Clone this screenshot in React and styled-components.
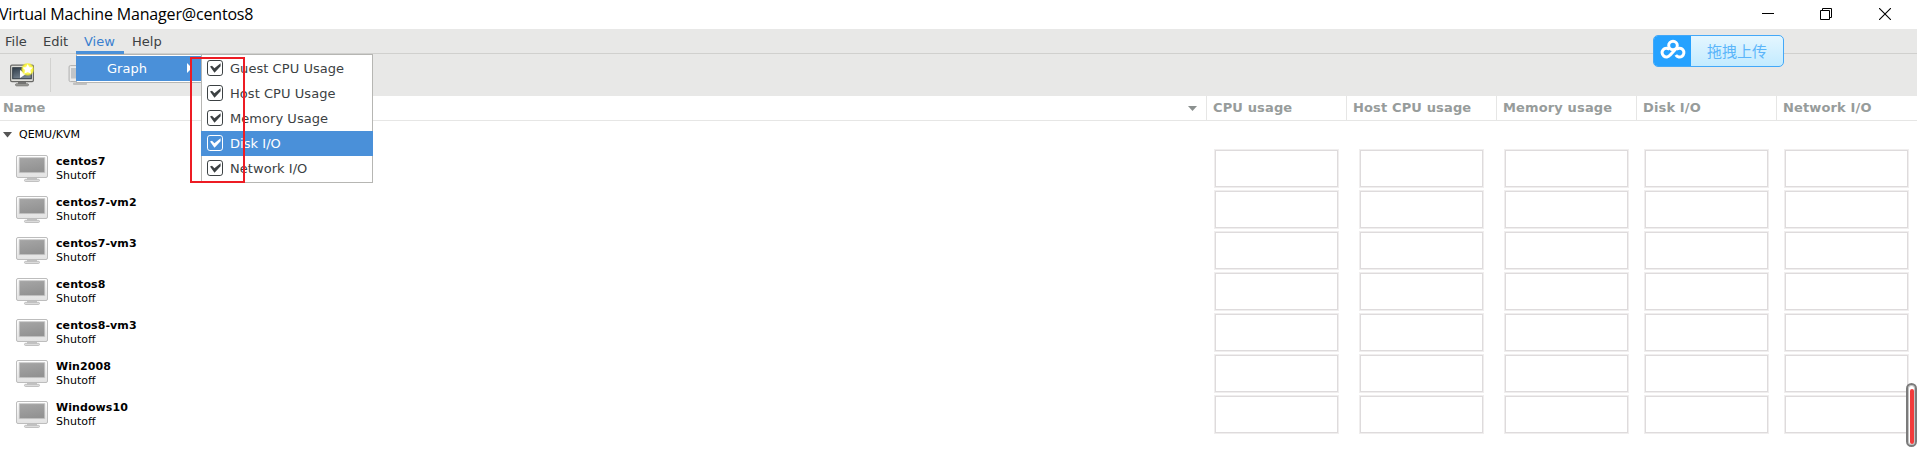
import React from 'react';
import styled, { createGlobalStyle } from 'styled-components';

const Global = createGlobalStyle`
  * { box-sizing: border-box; }
  body { margin: 0; background: #fff; overflow: hidden; }
`;

const Window = styled.div`
  position: relative;
  width: 1917px;
  height: 468px;
  overflow: hidden;
  background: #fff;
  color: #2e3436;
  font: 13px/16px "DejaVu Sans", sans-serif;
  white-space: nowrap;
`;

const TitleBar = styled.header`
  height: 29px;
  display: flex;
  justify-content: space-between;
  padding-right: 26px;
`;
const Title = styled.h1`
  margin: 0 0 0 -1px;
  font: 400 16px/29px "Open Sans", "Noto Sans", sans-serif;
  letter-spacing: -0.17px;
  color: #000;
`;
const WindowButtons = styled.div`
  display: flex;
  gap: 46px;
  padding-top: 8px;
  svg { display: block; }
  svg:last-child { margin-left: 1px; }
`;

const MenuBar = styled.nav`
  height: 25px;
  display: flex;
  background: #e8e8e7;
  border-bottom: 1px solid #d0d0ce;
`;
const MenuItem = styled.div`
  width: ${(p) => p.$width}px;
  padding: 5px 0 0 ${(p) => p.$pad ?? 8}px;
  height: 25px;
  color: ${(p) => (p.$active ? '#3a7fcf' : '#3c4143')};
  border-bottom: ${(p) => (p.$active ? '3px solid #4a90d9' : 'none')};
`;

const Toolbar = styled.div`
  height: 42px;
  display: flex;
  background: #e8e8e7;
  padding: 4px 0 0 9px;
`;
const ToolSeparator = styled.div`
  width: 1px;
  height: 34px;
  margin: 0 16px 0 15px;
  background: #d2d2d0;
`;
const ToolButton = styled.div`
  width: 26px;
  padding-top: ${(p) => p.$top}px;
  opacity: ${(p) => (p.$dim ? 0.5 : 1)};
  svg { display: block; }
`;

const columns = '1207px 140px 150px 140px 140px 140px';

const Header = styled.div`
  display: grid;
  grid-template-columns: ${columns};
  height: 25px;
  border-bottom: 1px solid #e6e6e5;
`;
const HeaderCell = styled.div`
  display: flex;
  justify-content: space-between;
  align-items: center;
  padding: 0 9px 0 ${(p) => (p.$first ? 3 : 6)}px;
  border-right: ${(p) => (p.$last ? '0' : '1px')} solid #e6e6e5;
  color: #979c9b;
  font-weight: 700;
  letter-spacing: 0.14px;
`;

const Connection = styled.div`
  height: 28px;
  display: flex;
  align-items: center;
  gap: 7px;
  padding-left: 3px;
  font-size: 11px;
  color: #000;
`;
const MachineRow = styled.div`
  height: 41px;
  display: grid;
  grid-template-columns: ${columns};
`;
const Machine = styled.div`
  display: flex;
  gap: 8px;
  padding: 6px 0 0 16px;
  color: #000;
  font-size: 11px;
  line-height: 14px;
  svg { display: block; }
`;
const MachineText = styled.div`
  strong { display: block; letter-spacing: 0.09px; }
`;
const GraphCell = styled.div`
  display: flex;
  justify-content: center;
  padding-right: 1px;
`;
const Graph = styled.div`
  width: 123px;
  height: 37px;
  margin-top: 1px;
  border: 1px solid #dedbdc;
  box-shadow: 0 0 0 1px #f0eeee;
`;

const Menus = styled.div`
  position: absolute;
  left: 76px;
  top: 54px;
  display: flex;
  align-items: flex-start;
`;
const Menu = styled.div`
  width: 125px;
  background: #fff;
  border: solid #b6b6b3;
  border-width: 1px 0 1px 1px;
  padding: 1px 0 1px;
`;
const SubMenu = styled(Menu)`
  width: 172px;
  border-width: 1px;
`;
const Entry = styled.div`
  height: 25px;
  display: flex;
  align-items: flex-start;
  margin: 0 -1px;
  padding: 4px 0 0 ${(p) => (p.$parent ? 31 : 6)}px;
  gap: 7px;
  color: ${(p) => (p.$selected ? '#fff' : '#3c4143')};
  background: ${(p) => (p.$selected ? '#4a90d9' : 'transparent')};
  letter-spacing: 0.05px;
`;
const EntryLabel = styled.span`
  padding-top: 1px;
`;
const EntryArrow = styled.svg`
  margin: 3px 10px 0 auto;
`;
const Highlight = styled.div`
  position: absolute;
  left: 190px;
  top: 57px;
  width: 55px;
  height: 126px;
  border: 2px solid #ed1c24;
`;

const UploadWidget = styled.div`
  position: absolute;
  left: 1653px;
  top: 35px;
  width: 131px;
  height: 32px;
  display: flex;
  border: 1px solid #43a8f8;
  border-radius: 5px;
  overflow: hidden;
  background: linear-gradient(#e4f6ff, #c3ebff);
`;
const UploadLogo = styled.div`
  width: 37px;
  background: #26a2ff;
  svg { display: block; margin: 3px 0 0 6px; }
`;
const UploadText = styled.div`
  flex: 1;
  padding-left: 16px;
  font: 15px/30px "Noto Sans CJK SC", sans-serif;
  color: #5bb5fa;
`;
const FloatingScroll = styled.div`
  position: absolute;
  left: 1906px;
  top: 383px;
  width: 11px;
  height: 64px;
  border: 2px solid #7b7b7b;
  border-radius: 6px;
  background: #fff;
  box-shadow: inset 0 0 0 1px #c4c4c4;
  padding: 4px 1.5px 1px;
`;
const ScrollFill = styled.div`
  height: 100%;
  border-radius: 2px;
  background: #f23c3c;
`;

const Monitor = () => (
  <svg width="32" height="28" viewBox="0 0 32 28">
    <defs>
      <linearGradient id="case" x2="0" y2="1"><stop stopColor="#fff" /><stop offset="1" stopColor="#e2e2e2" /></linearGradient>
      <linearGradient id="screen" x2="0.3" y2="1"><stop stopColor="#a6a6a6" /><stop offset="1" stopColor="#929292" /></linearGradient>
    </defs>
    <rect x="11" y="22" width="10" height="3" fill="#c4c4c4" />
    <rect x="8.5" y="24.3" width="15" height="2.2" rx="1.1" fill="#dcdcdc" stroke="#b5b5b5" strokeWidth=".8" />
    <rect x=".5" y=".5" width="31" height="22" rx="1.5" fill="url(#case)" stroke="#bdbdbd" />
    <rect x="3.2" y="2.7" width="25.6" height="15" fill="url(#screen)" stroke="#c8c8c8" strokeWidth=".8" />
  </svg>
);

const NewMachineIcon = () => (
  <svg width="26" height="24" viewBox="0 0 26 24">
    <defs>
      <linearGradient id="dark" x2=".5" y2="1"><stop stopColor="#2e3b48" /><stop offset="1" stopColor="#788592" /></linearGradient>
      <radialGradient id="glow"><stop stopColor="#fffef0" /><stop offset=".7" stopColor="#faf537" /><stop offset="1" stopColor="#f5ef20" stopOpacity="0" /></radialGradient>
    </defs>
    <rect x="9" y="18.5" width="8" height="3" fill="#777" />
    <rect x="6.5" y="20.8" width="13" height="2" rx="1" fill="#a4a4a0" stroke="#686866" strokeWidth=".8" />
    <rect x="1.6" y="2.2" width="22.8" height="16.4" rx="1.3" fill="#deded9" stroke="#686866" strokeWidth="1.2" />
    <rect x="3.7" y="4.7" width="18.6" height="11" fill="url(#dark)" stroke="#343d46" />
    <path d="M11 7v8l6-4z" fill="#fff" />
    <circle cx="18.7" cy="6.3" r="7" fill="url(#glow)" />
    <path d="m18.7 1 1.5 3.2 3.8.4-2.8 2.5.9 3.7-3.4-1.9-3.4 1.9.9-3.7-2.8-2.5 3.8-.4z" fill="#fff" />
  </svg>
);

const Check = () => (
  <svg width="16" height="16" viewBox="0 0 16 16">
    <rect x=".5" y=".5" width="15" height="15" rx="2.4" fill="none" stroke="currentColor" />
    <path d="M3 6.5 5 5.7 7.4 8.3 13.6 3.2 13.6 6.2 7.5 12.8z" fill="currentColor" />
  </svg>
);

const metrics = ['CPU usage', 'Host CPU usage', 'Memory usage', 'Disk I/O', 'Network I/O'];
const machines = ['centos7', 'centos7-vm2', 'centos7-vm3', 'centos8', 'centos8-vm3', 'Win2008', 'Windows10'];
const graphOptions = ['Guest CPU Usage', 'Host CPU Usage', 'Memory Usage', 'Disk I/O', 'Network I/O'];

export default function App() {
  return (
    <Window>
      <Global />
      <TitleBar>
        <Title>Virtual Machine Manager@centos8</Title>
        <WindowButtons>
          <svg width="12" height="12"><path d="M0 5.5h12" stroke="#000" /></svg>
          <svg width="12" height="12" fill="none" stroke="#000"><path d="M.5 2.5h9v9h-9zM2.5 2V.5h9v9H10" /></svg>
          <svg width="12" height="12" stroke="#000" strokeWidth="1.1"><path d="m0 0 12 12M12 0 0 12" /></svg>
        </WindowButtons>
      </TitleBar>
      <MenuBar>
        <MenuItem $width={35} $pad={5}>File</MenuItem>
        <MenuItem $width={41}>Edit</MenuItem>
        <MenuItem $width={48} $active>View</MenuItem>
        <MenuItem $width={46}>Help</MenuItem>
      </MenuBar>
      <Toolbar>
        <ToolButton $top={5}><NewMachineIcon /></ToolButton>
        <ToolSeparator />
        <ToolButton $top={6} $dim>
          <svg width="26" height="22" viewBox="0 0 26 22">
            <rect x="6" y="18.5" width="14" height="2.5" rx="1" fill="#999" />
            <rect x="2.1" y="1.6" width="22.3" height="16" rx="1.3" fill="#eee" stroke="#777" />
            <rect x="4" y="4" width="18" height="10.5" fill="#9ba3aa" />
          </svg>
        </ToolButton>
      </Toolbar>
      <Header>
        <HeaderCell $first>
          Name
          <svg width="9" height="5"><path d="M0 0h9L4.5 5z" fill="#8b908f" /></svg>
        </HeaderCell>
        {metrics.map((m, i) => <HeaderCell key={m} $last={i === 4}>{m}</HeaderCell>)}
      </Header>
      <Connection>
        <svg width="9" height="6"><path d="M0 0h9L4.5 5.5z" fill="#555" /></svg>
        QEMU/KVM
      </Connection>
      {machines.map((name) => (
        <MachineRow key={name}>
          <Machine>
            <Monitor />
            <MachineText><strong>{name}</strong>Shutoff</MachineText>
          </Machine>
          {metrics.map((m) => <GraphCell key={m}><Graph /></GraphCell>)}
        </MachineRow>
      ))}
      <Menus>
        <Menu>
          <Entry $selected $parent>
            <EntryLabel>Graph</EntryLabel>
            <EntryArrow width="5" height="10"><path d="M0 0v10l5-5z" fill="#fff" /></EntryArrow>
          </Entry>
        </Menu>
        <SubMenu>
          {graphOptions.map((o) => (
            <Entry key={o} $selected={o === 'Disk I/O'}><Check /><EntryLabel>{o}</EntryLabel></Entry>
          ))}
        </SubMenu>
      </Menus>
      <Highlight />
      <UploadWidget>
        <UploadLogo>
          <svg width="26" height="22" viewBox="0 0 26 22" fill="none" stroke="#fff" strokeWidth="3">
            <circle cx="13" cy="6.5" r="4.3" />
            <path d="M16.2 9.5 10 16.2A4.4 4.4 0 1 1 9.5 10.4M16.5 10.4A4.4 4.4 0 1 1 15.8 16" />
          </svg>
        </UploadLogo>
        <UploadText>拖拽上传</UploadText>
      </UploadWidget>
      <FloatingScroll><ScrollFill /></FloatingScroll>
    </Window>
  );
}
